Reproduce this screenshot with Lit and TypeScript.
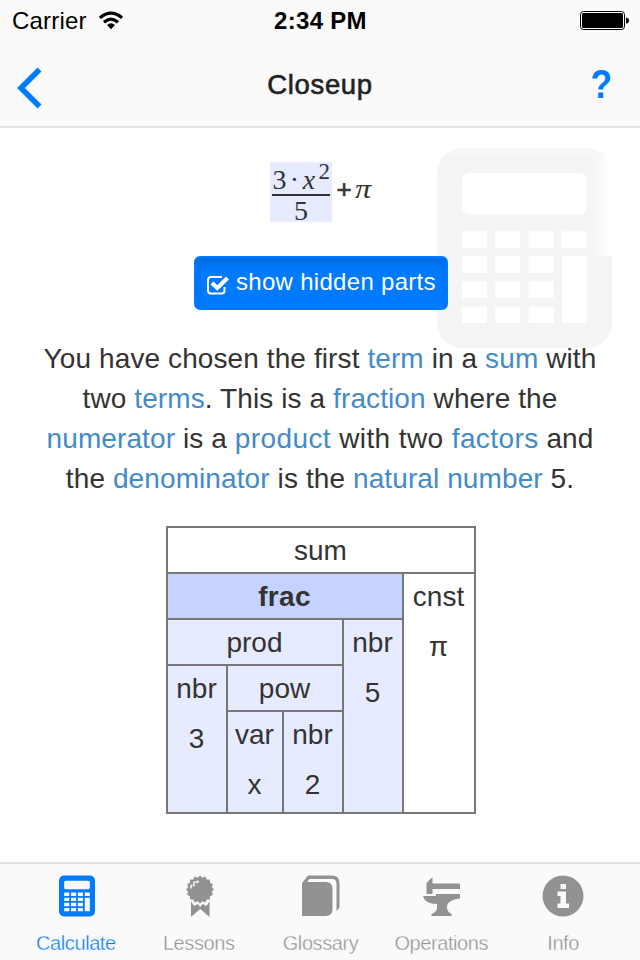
import { LitElement, html, svg, css } from "lit";
import { customElement } from "lit/decorators.js";

const COLS = [0, 1, 2, 3];

const STAR = Array.from({ length: 32 }, (_, i) => {
  const radius = i % 2 ? 12 : 14;
  const angle = (i * Math.PI) / 16 - Math.PI / 2;
  return `${(14 + radius * Math.cos(angle)).toFixed(2)},${(14.5 + radius * Math.sin(angle)).toFixed(2)}`;
}).join(" ");

function calculator() {
  return svg`<g fill-rule="evenodd">
    <path d="M25 0H150A25 25 0 0 1 175 25V175A25 25 0 0 1 150 200H25A25 25 0 0 1 0 175V25A25 25 0 0 1 25 0Z
      M33 25A8 8 0 0 0 25 33V58.500A8 8 0 0 0 33 66.500H142A8 8 0 0 0 150 58.500V33A8 8 0 0 0 142 25Z
      M125 108H150V175H125Z
      ${COLS.map((c) => COLS.filter((r) => c < 3 || r === 0)
        .map((r) => `M${25 + c * 33.3} ${83.3 + r * 25}h25v16.700h-25z`).join("")).join("")}"/>
  </g>`;
}

@customElement("app-root")
export class AppRoot extends LitElement {
  static styles = css`
    :host {
      display: flex; flex-direction: column; width: 640px; height: 960px;
      background: #fff; color: #333; overflow: hidden;
      font-family: "Liberation Sans", Arial, sans-serif; font-size: 28px;
    }
    * { box-sizing: border-box; }
    svg { display: block; }
    header { height: 128px; flex: none; background: #fafafa; border-bottom: 2px solid #e4e4e4; }
    .status {
      height: 42px; display: grid; grid-template-columns: 1fr auto 1fr; align-items: center;
      color: #000; font-size: 24px; padding: 0 11px 0 12px; line-height: 42px;
    }
    .carrier { display: flex; align-items: center; gap: 12px; letter-spacing: 0.2px; }
    .carrier svg { margin-top: -2px; }
    .time { font-weight: 700; font-size: 24px; letter-spacing: 0.3px; }
    .battery { justify-self: end; }
    .nav { height: 84px; display: grid; grid-template-columns: 1fr auto 1fr; align-items: center; padding: 0 28px 0 17px; }
    .back { margin-top: 7px; }
    .title { font-size: 27.500px; color: #222; letter-spacing: 0.65px; -webkit-text-stroke: 0.6px #222; padding-left: 11px; margin-top: 1px; }
    .help { justify-self: end; font-size: 41px; font-weight: 700; color: #007aff; transform: scaleX(0.86); transform-origin: right; }
    main { flex: 1; position: relative; display: flex; flex-direction: column; align-items: center; padding: 34px 0 0 2px; }
    .ghost { position: absolute; left: 437px; top: 20px; fill: #f4f4f4; }
    .formula {
      position: relative; height: 60px; display: flex; align-items: center;
      font-family: "Liberation Serif", serif; font-size: 28px; line-height: 28px;
    }
    .frac { width: 62px; height: 60px; background: #e6ebff; padding: 0 2px; display: flex; flex-direction: column; }
    .numer { height: 34px; border-bottom: 2px solid #333; display: flex; padding-top: 4px; white-space: pre; }
    .dot { width: 16px; text-align: center; }
    .x { font-style: italic; width: 13px; text-align: center; }
    .sup { font-size: 23px; line-height: 22px; margin: -5px 0 0 3px; }
    .denom { text-align: center; line-height: 29px; padding-right: 1px; }
    .plus { font-family: "Liberation Sans", sans-serif; font-size: 26px; -webkit-text-stroke: 0.6px #333; margin: -7px 3px 0 4px; }
    .pi { font-style: italic; margin: -6px 1px 0 0; width: 16px; transform: scaleX(1.15); transform-origin: left; }
    .toggle {
      position: relative; width: 254px; height: 54px; margin-top: 34px; border-radius: 6px; background: #007aff;
      border: 2px solid #007aff; box-shadow: inset 0 6px 10px rgba(0, 0, 0, 0.125);
      color: #fff; font-size: 24px; display: flex; align-items: center; gap: 7px; padding-left: 11px; white-space: nowrap;
    }
    .toggle span { letter-spacing: 0.3px; margin-top: -2px; }
    .toggle svg { margin-top: 4px; }
    .text { position: relative; margin: 29px 2px 0 0; line-height: 40px; text-align: center; white-space: nowrap; }
    .text div { height: 40px; letter-spacing: 0.1px; }
    .text .wide { letter-spacing: 0.4px; }
    a { color: #428bca; }
    .tree {
      margin-top: 27px; display: grid; gap: 2px; padding: 2px; background: #777;
      grid-template-columns: 58px 54px 58px 58px 70px; grid-template-rows: repeat(4, 44px) 100px;
    }
    .cell { background: #e6ebff; text-align: center; line-height: 44px; padding: 1px 1px 0 0; display: flex; flex-direction: column; gap: 6px; height: 100%; min-height: 0; }
    .plain { background: #fff; }
    .picked { background: #c6d3ff; font-weight: 700; letter-spacing: 0.3px; }
    .c-sum { grid-area: 1 / 1 / 2 / 6; }
    .c-frac { grid-area: 2 / 1 / 3 / 5; }
    .c-cnst { grid-area: 2 / 5 / 6 / 6; }
    .c-prod { grid-area: 3 / 1 / 4 / 4; }
    .c-five { grid-area: 3 / 4 / 6 / 5; }
    .c-three { grid-area: 4 / 1 / 6 / 2; }
    .c-pow { grid-area: 4 / 2 / 5 / 4; }
    .c-x { grid-area: 5 / 2 / 6 / 3; }
    .c-two { grid-area: 5 / 3 / 6 / 4; }
    footer {
      height: 98px; flex: none; background: #fafafa; border-top: 2px solid #e2e2e2; padding: 0 16px 0 15px;
      display: grid; grid-template-columns: repeat(5, 1fr);
    }
    .tab {
      color: #929292; fill: #929292; font-size: 20px; line-height: 24px; display: flex; flex-direction: column;
      align-items: center; padding-top: 11px; gap: 14px; letter-spacing: -0.42px;
    }
    .tab span { -webkit-text-stroke: 0.35px #fafafa; }
    .on { color: #007aff; fill: #007aff; }
    .on svg { margin-left: 2px; }
    .medal, .book { margin-left: 4px; }
    .medal + span, .book + span { margin-left: 2px; }
  `;

  render() {
    return html`
      <header>
        <div class="status">
          <div class="carrier">Carrier
            <svg width="24" height="19" viewBox="0 0 24 19" fill="none" stroke="#000" stroke-width="3.200">
              <path d="M.9 6.800Q12 -2.600 23.100 6.800M5 11.300Q12 5 19 11.300"/>
              <path d="M8 14Q12 10.500 16 14L12 18.300Z" fill="#000" stroke="none"/>
            </svg>
          </div>
          <div class="time">2:34 PM</div>
          <svg class="battery" width="49" height="20" viewBox="0 0 49 20">
            <rect x=".5" y=".5" width="44" height="18" rx="3" fill="#fff" stroke="#000"/>
            <rect x="2" y="2" width="41" height="15" rx="1.500"/>
            <path d="M46 6.500Q49 7 49 9.500T46 12.500Z"/>
          </svg>
        </div>
        <div class="nav">
          <svg class="back" width="25" height="42" viewBox="0 0 25 42">
            <path d="M22.500 2.500L4 21L22.500 39.500" fill="none" stroke="#007aff" stroke-width="5.500"/>
          </svg>
          <div class="title">Closeup</div>
          <div class="help">?</div>
        </div>
      </header>
      <main>
        <svg class="ghost" width="175" height="200" viewBox="0 0 175 200">
          ${calculator()}
          <defs><linearGradient id="fade"><stop offset="0" stop-color="#fff" stop-opacity="0"/><stop offset="1" stop-color="#fff"/></linearGradient></defs>
          <rect x="151" y="8" width="24" height="100" fill="url(#fade)"/>
          <rect width="175" height="7" fill="#fff" fill-opacity=".25"/>
        </svg>
        <div class="formula">
          <div class="frac">
            <div class="numer"><span>3</span><span class="dot">·</span><span class="x">x</span><span class="sup">2</span></div>
            <div class="denom">5</div>
          </div>
          <span class="plus">+</span><span class="pi">π</span>
        </div>
        <div class="toggle">
          <svg width="22" height="20" viewBox="0 0 22 20" fill="none" stroke="#fff">
            <path d="M15 2H4Q1 2 1 5V15.500Q1 18.500 4 18.500H14.500Q17.500 18.500 17.500 15.500V12" stroke-width="2"/>
            <path d="M5 8L10.300 13L20.500 3" stroke-width="4"/>
          </svg>
          <span>show hidden parts</span>
        </div>
        <div class="text">
          <div>You have chosen the first <a>term</a> in a <a>sum</a> with</div>
          <div>two <a>terms</a>. This is a <a>fraction</a> where the</div>
          <div><a>numerator</a> is a <span class="wide"><a>product</a> with two <a>factors</a></span> and</div>
          <div>the <a>denominator</a> is the <a>natural number</a> 5.</div>
        </div>
        <div class="tree">
          <div class="cell plain c-sum">sum</div>
          <div class="cell picked c-frac">frac</div>
          <div class="cell plain c-cnst"><span>cnst</span><span>π</span></div>
          <div class="cell c-prod">prod</div>
          <div class="cell c-five"><span>nbr</span><span>5</span></div>
          <div class="cell c-three"><span>nbr</span><span>3</span></div>
          <div class="cell c-pow">pow</div>
          <div class="cell c-x"><span>var</span><span>x</span></div>
          <div class="cell c-two"><span>nbr</span><span>2</span></div>
        </div>
      </main>
      <footer>
        <div class="tab on">
          <svg width="36" height="42" viewBox="0 -3 175 206" preserveAspectRatio="none">${calculator()}</svg>
          <span>Calculate</span>
        </div>
        <div class="tab">
          <svg class="medal" width="28" height="42" viewBox="0 0 28 42">
            <polygon points="${STAR}"/>
            <path d="M5 26L8 31L12 29L14.200 32L16.500 29L20.500 31L23.500 26V42L14.200 34L5 42Z"/>
            <path d="M5 13.500V10.500H8V7H12V5" fill="none" stroke="#fafafa" stroke-width="1.500" stroke-dasharray="4.500 .8"/>
          </svg>
          <span>Lessons</span>
        </div>
        <div class="tab">
          <svg class="book" width="38" height="42" viewBox="0 0 38 42">
            <path d="M0 8L6 .5H30Q37.500 .5 37.500 8.500V32.500L34.500 36V9Q34.500 4 30 4H7.500L5 7H24Q30.500 7 30.500 14V34Q30.500 41 24 41H0Z"/>
          </svg>
          <span>Glossary</span>
        </div>
        <div class="tab">
          <svg width="37" height="42" viewBox="0 0 37 42">
            <path d="M3.500 8L9.500 2V8.500H37V14H9.500V19H3.500Z"/>
            <path d="M0 21H13V19H37V23.500Q24 25 24 32Q24 37 28.500 39V41H8.500V39Q14 37 14 32.500V29Q2 29 0 21Z"/>
          </svg>
          <span>Operations</span>
        </div>
        <div class="tab">
          <svg width="42" height="42" viewBox="0 0 42 42">
            <circle cx="21" cy="21" r="20.500"/>
            <path d="M18.500 9H24V14H18.500ZM15.500 16.500H24V28.500H27V33H15.500V28.500H18.500V21H15.500Z" fill="#fafafa"/>
          </svg>
          <span>Info</span>
        </div>
      </footer>`;
  }
}
